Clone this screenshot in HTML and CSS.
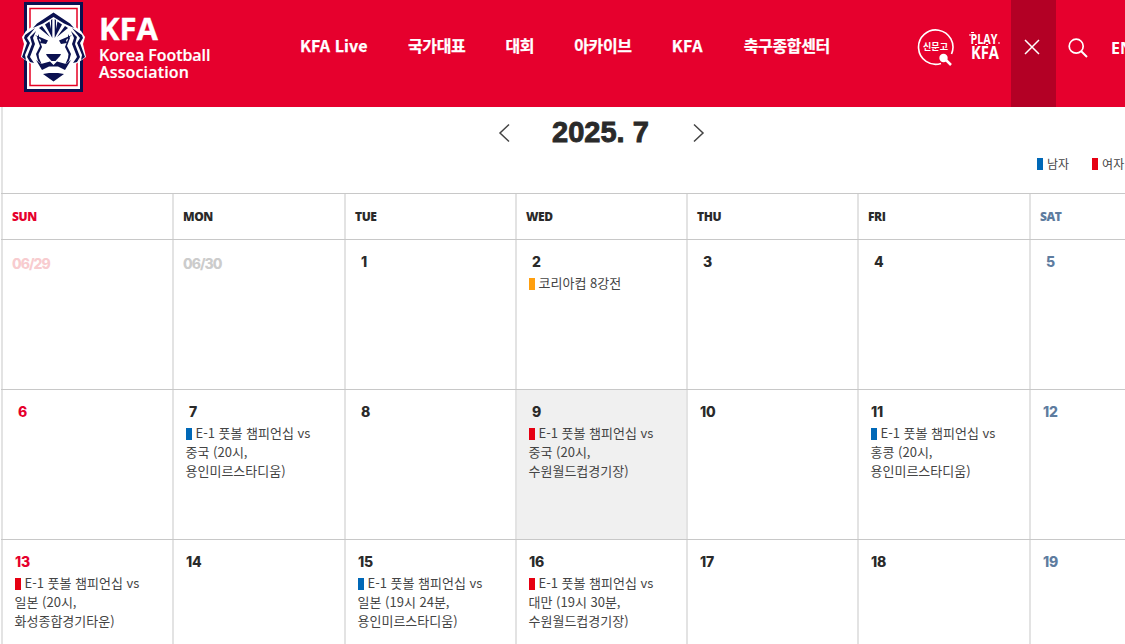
FILE: index.html
```html
<!DOCTYPE html>
<html lang="ko">
<head>
<meta charset="utf-8">
<title>KFA</title>
<link rel="stylesheet" href="styles.css">
</head>
<body>
<header class="header">
  <a class="logo">
    <svg class="crest" width="68" height="94" viewBox="0 0 68 94">
      <rect x="4" y="2" width="59" height="90" fill="#0b1150"/>
      <rect x="7" y="5" width="53" height="84" fill="#fff"/>
      <rect x="10" y="8.500" width="47" height="77" fill="#fff" stroke="#e60023" stroke-width="1.500"/>
      <path d="M33 11L18 22L10 28L6 31L2 37L4 44L1 57L8 62L15 66L22 73L33 83L45 73L52 66L59 62L66 57L63 44L65 37L61 31L57 28L48 22Z" fill="#fff"/>
      <g fill="#0b1150">
        <path d="M33.500 12.500L50 23.500L54 28L44 23.500L33.500 17L23 23.500L13 28L17 23.500Z"/>
        <path d="M32.300 19V38L25 24.500L29.500 21.500L31 29V20ZM34.700 19V38L42 24.500L37.500 21.500L36 29V20Z"/>
        <path d="M22 26L30 37L19 28ZM45 26L37 37L48 28Z"/>
        <path d="M15 35L28 40.500L26 44L20 43L21 40ZM52 35L39 40.500L41 44L47 43L46 40Z"/>
        <path d="M26 54H41L40 56L35.500 61H31.500L27 56Z"/>
        <path d="M16 60L21 64L30 61.500L33.500 65L37 61.500L46 64L51 60L45 70L38 66.500H29L22 70ZM23 74L29 73H38L44 74L33.500 81.500Z"/>
        <path d="M15 28L5 35L4 38L7 43L2 57L6 60L5 55L10 43L7 38ZM16 31L10 37L12 44L7 57L10 62L14 63L10 57L15 44L13 38ZM19 34L17 38L20 46L16 54L18 61L22 65L19 58L18.500 54L22 47L19 39Z"/>
        <path d="M52 28L62 35L63 38L60 43L65 57L61 60L62 55L57 43L60 38ZM51 31L57 37L55 44L60 57L57 62L53 63L57 57L52 44L54 38ZM48 34L50 38L47 46L51 54L49 61L45 65L48 58L48.500 54L45 47L48 39Z"/>
      </g>
    </svg>
    <span class="brand"><b>KFA</b><span>Korea Football</span><span class="assoc">Association</span></span>
  </a>
  <nav class="nav"><a>KFA Live</a><a>국가대표</a><a>대회</a><a>아카이브</a><a>KFA</a><a>축구종합센터</a></nav>
  <div class="tools">
    <svg class="report" width="38" height="38" viewBox="0 0 38 38">
      <path d="M24 35.500A17.200 17.200 0 1 1 34.500 26" fill="none" stroke="#fff" stroke-width="1.600"/>
      <text x="18.500" y="22" text-anchor="middle" class="report-text">신문고</text>
      <circle cx="26.500" cy="30" r="4.200" fill="#fff"/><path d="M28 31L34 37" stroke="#fff" stroke-width="2.500"/>
    </svg>
    <svg class="play" width="32" height="30" viewBox="0 0 32 30">
      <text x="1.500" y="12.500" class="play-text" textLength="27" lengthAdjust="spacingAndGlyphs">PLAY</text>
      <text x="2" y="28" class="kfa-text" textLength="28" lengthAdjust="spacingAndGlyphs">KFA</text>
      <path d="M0 4H2M2 1.500H5M6 13.500H8M17 13.500H19M29 12H31" stroke="#fff"/>
    </svg>
    <div class="close"><svg width="16" height="16" viewBox="0 0 16 16"><path d="M1 1L15 15M15 1L1 15" stroke="#fff" stroke-width="1.500"/></svg></div>
    <svg class="search" width="20" height="20" viewBox="0 0 20 20"><circle cx="8.200" cy="8.200" r="7" fill="none" stroke="#fff" stroke-width="1.700"/><path d="M13 13L19 19" stroke="#fff" stroke-width="1.900"/></svg>
    <span class="lang">EN</span>
  </div>
</header>
<main class="calendar">
  <div class="top">
    <div class="month">
      <svg width="12" height="20" viewBox="0 0 12 20"><path d="M11 1.500L2 10L11 18.500" fill="none" stroke="#444" stroke-width="1.500"/></svg>
      <h1>2025. 7</h1>
      <svg width="12" height="20" viewBox="0 0 12 20"><path d="M1 1.500L10 10L1 18.500" fill="none" stroke="#444" stroke-width="1.500"/></svg>
    </div>
    <div class="legend"><span><i class="blue"></i>남자</span><span><i class="red"></i>여자</span></div>
  </div>
  <div class="row names"><div class="sun">SUN</div><div>MON</div><div>TUE</div><div>WED</div><div>THU</div><div>FRI</div><div class="sat">SAT</div></div>
  <div class="row">
    <div class="prev sun"><b>06/29</b></div><div class="prev"><b>06/30</b></div><div class="one"><b>1</b></div>
    <div class="one"><b>2</b><p><i class="orange"></i>코리아컵 8강전</p></div>
    <div class="one"><b>3</b></div><div class="one"><b>4</b></div><div class="one sat"><b>5</b></div>
  </div>
  <div class="row">
    <div class="one sun"><b>6</b></div>
    <div class="one"><b>7</b><p><i class="blue"></i>E-1 풋볼 챔피언십 vs<br>중국 (20시,<br>용인미르스타디움)</p></div>
    <div class="one"><b>8</b></div>
    <div class="one today"><b>9</b><p><i class="red"></i>E-1 풋볼 챔피언십 vs<br>중국 (20시,<br>수원월드컵경기장)</p></div>
    <div><b>10</b></div>
    <div><b>11</b><p><i class="blue"></i>E-1 풋볼 챔피언십 vs<br>홍콩 (20시,<br>용인미르스타디움)</p></div>
    <div class="sat"><b>12</b></div>
  </div>
  <div class="row last">
    <div class="sun"><b>13</b><p><i class="red"></i>E-1 풋볼 챔피언십 vs<br>일본 (20시,<br>화성종합경기타운)</p></div>
    <div><b>14</b></div>
    <div><b>15</b><p><i class="blue"></i>E-1 풋볼 챔피언십 vs<br>일본 (19시 24분,<br>용인미르스타디움)</p></div>
    <div><b>16</b><p><i class="red"></i>E-1 풋볼 챔피언십 vs<br>대만 (19시 30분,<br>수원월드컵경기장)</p></div>
    <div><b>17</b></div><div><b>18</b></div><div class="sat"><b>19</b></div>
  </div>
</main>
</body>
</html>
```
FILE: styles.css
```css
* { box-sizing: border-box; }
body { margin: 0; width: 1125px; height: 644px; overflow: hidden; background: #fff; color: #2a2a2a; font-family: "Noto Sans CJK KR", sans-serif; }
svg { display: block; flex: none; }
.header { display: flex; height: 107px; background: #e6002d; color: #fff; overflow: hidden; }
.logo { display: flex; width: 300px; flex: none; padding-left: 20px; }
.brand { display: flex; flex-direction: column; padding: 10px 0 0 11px; font-family: "Open Sans", sans-serif; font-weight: 600; font-size: 16px; line-height: 17px; letter-spacing: -0.05px; white-space: nowrap; -webkit-text-stroke: 0.2px #fff; }
.brand b { font-size: 31px; line-height: 37px; font-weight: 700; letter-spacing: 0; -webkit-text-stroke: 0.4px #fff; }
.brand .assoc { letter-spacing: 0.15px; }
.nav { display: flex; gap: 40px; width: 617px; flex: none; padding-top: 33px; font-weight: 700; font-size: 16px; line-height: 24px; letter-spacing: -0.35px; white-space: nowrap; -webkit-text-stroke: 0.25px #fff; }
.nav a:first-child { width: 68px; letter-spacing: 0.1px; }
.nav a:nth-child(5) { width: 32px; letter-spacing: 0.4px; }
.tools { display: flex; flex: none; }
.report { margin-top: 28px; }
.report-text { font: 700 9px "Noto Sans CJK KR", sans-serif; fill: #fff; }
.play { margin: 31px 10px 0 14px; }
.play-text { font: 700 14px "Open Sans", sans-serif; fill: #fff; }
.kfa-text { font: 700 18px "Open Sans", sans-serif; fill: #fff; }
.close { width: 45px; height: 107px; padding: 39px 0 0 13px; background: #b30025; }
.search { margin: 38px 0 0 12px; }
.lang { margin: 36px 0 0 23px; font: 700 16px/24px "Open Sans", sans-serif; }
.calendar { margin-left: 1px; width: 1124px; height: 537px; overflow: hidden; }
.top { height: 86px; border-left: 2px solid #e3e3e3; }
.month { display: flex; gap: 43px; padding: 16px 0 0 495px; height: 48px; }
.month h1 { margin: -8px 0 0 -1px; font: 700 29px/35px "Liberation Sans", sans-serif; width: 98px; white-space: nowrap; -webkit-text-stroke: 0.9px #2a2a2a; }
.legend { display: flex; gap: 23px; padding-left: 1034px; font-size: 12px; line-height: 18px; height: 18px; color: #444; }
.legend span { display: flex; align-items: center; white-space: nowrap; }
.legend i { margin-right: 4px; }
i { display: inline-block; width: 6px; height: 12px; flex: none; }
.blue { background: #0068b7; }
.red { background: #e60012; }
.orange { background: #ff9f0e; }
.row { display: grid; grid-template-columns: 171px 172px 171px 171px 171px 172px 171px; height: 150px; border-top: 1px solid #c8c8c8; }
.row > div { border-left: 2px solid #e3e3e3; padding: 13px 0 0 12px; }
.names { height: 46px; }
.names > div { padding: 13px 0 0 9px; font: 800 12px/20px "Open Sans", sans-serif; letter-spacing: -0.4px; }
.last { height: 105px; }
.row b { display: block; font: 800 14px/18px Inter, sans-serif; letter-spacing: -0.2px; }
.row .one b { padding-left: 3px; }
.row > .prev { padding: 15px 0 0 9px; color: #ccc; }
.row > .prev b { letter-spacing: -1px; }
.row > .prev.sun { color: #f8cccf; }
.sun { color: #e6002d; }
.sat { color: #5e7c9f; }
.today { background: #f0f0f0; }
.row p { margin: 2px 0 0 -0.5px; font-size: 13px; line-height: 19px; letter-spacing: 0; color: #444; white-space: nowrap; }
.row p i { margin-right: 4px; vertical-align: -2px; }
```
